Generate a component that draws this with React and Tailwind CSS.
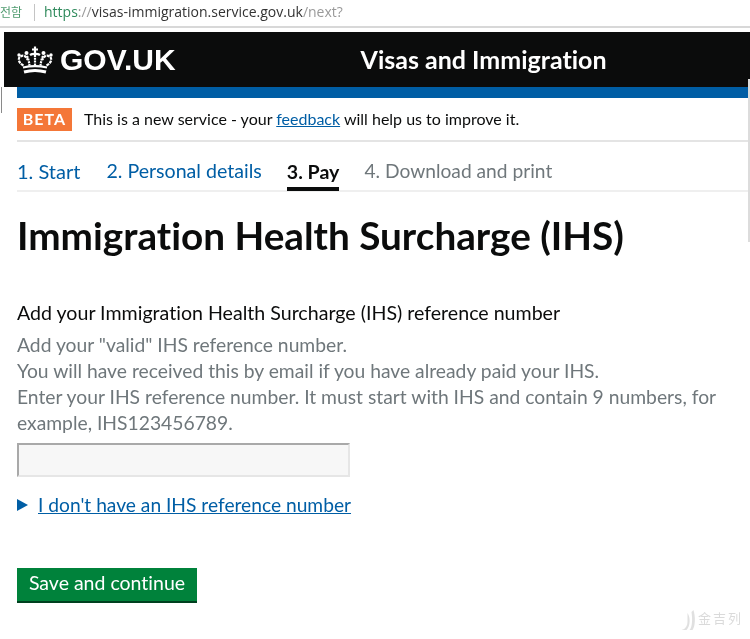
import React from 'react';

const font = "font-['Lato','Noto_Sans',sans-serif]";

// crown logo, drawn by hand from the reference
const Crown = () => (
  <svg width="36" height="28" viewBox="0 0 36 28" className="shrink-0">
    <g fill="none" stroke="#fff" strokeWidth="2.2">
      <path d="M6.5 19.5 C1.5 17 0.5 12.5 3.5 10.5 C6.5 8.5 10 10.5 10.5 14" strokeDasharray="3 0.8" />
      <path d="M29.5 19.5 C34.5 17 35.5 12.5 32.5 10.5 C29.5 8.5 26 10.5 25.5 14" strokeDasharray="3 0.8" />
      <path d="M10 10 C11.5 13 12 16 12.5 19.5" strokeDasharray="2 0.8" />
      <path d="M26 10 C24.5 13 24 16 23.5 19.5" strokeDasharray="2 0.8" />
      <path d="M18 9 V19.5" strokeDasharray="2 0.8" />
      <path d="M18 0.5 V7 M15 3.5 H21" />
      <path d="M13 9 C15 7.5 21 7.5 23 9" />
      <path d="M6 21.5 C14 19.8 22 19.8 30 21.5" strokeWidth="2.2" />
      <path d="M7 26 C14 24 22 24 29 26" strokeWidth="3" />
    </g>
    <g fill="#fff">
      <circle cx="2" cy="9" r="1.7" />
      <circle cx="34" cy="9" r="1.7" />
      <circle cx="9.5" cy="7" r="2" />
      <circle cx="26.5" cy="7" r="2" />
    </g>
  </svg>
);

const App = () => {
  return (
    <div className={`${font} relative h-[639px] w-[750px] overflow-hidden bg-white blur-[0.4px] [font-variant-ligatures:none]`}>
      {/* Browser address bar */}
      <div className="flex h-[28px] items-center border-b-2 border-[#d8d8d8] pb-[2px] leading-none">
        <span className="w-[25px] font-['Noto_Sans_CJK_KR',sans-serif] text-[12px] whitespace-nowrap text-[#4f9b6f]">전함</span>
        <span className="ml-[9px] mr-[9px] h-[17px] w-px bg-[#c4c4c4]" />
        <span className="font-['Open_Sans',sans-serif] text-[14px] whitespace-nowrap">
          <span className="text-[#2f8a5c]">https</span>
          <span className="text-[#9a9a9a]">://</span>
          <span className="text-[#333]">visas-immigration.service.gov.uk</span>
          <span className="text-[#9a9a9a]">/next?</span>
        </span>
      </div>

      {/* Header */}
      <div className="mt-[4px] ml-[4px] flex h-[55px] items-center bg-[#0b0c0c] pl-[13px] text-white">
        <Crown />
        <span className="ml-[7px] font-['Liberation_Sans',sans-serif] text-[30px] font-bold">GOV.UK</span>
        <span className="ml-[185px] text-[25px] font-bold">Visas and Immigration</span>
      </div>

      <div className="ml-[17px] mr-[2px]">
        <div className="h-[11px] bg-[#005ea5]" />

        {/* Beta banner */}
        <div className="flex h-[44px] items-center border-b-2 border-[#e4e4e4]">
          <span className="flex h-[23px] w-[55px] items-center justify-center bg-[#f47738] text-[16px] font-bold tracking-[1px] text-white">BETA</span>
          <span className="ml-[12px] text-[16px] text-[#0b0c0c]">
            This is a new service - your <a className="text-[#005ea5] underline">feedback</a> will help us to improve it.
          </span>
        </div>

        {/* Steps */}
        <div className="flex h-[50px] items-center gap-[25px] border-b-2 border-[#efefef] pt-[10px] text-[19.6px]">
          <span className="mr-[1px] text-[20px] text-[#005ea5]">1. Start</span>
          <span className="text-[#005ea5]">2. Personal details</span>
          <span className="flex h-[40px] items-center border-b-[4px] border-[#0b0c0c] pt-[5px] font-bold text-[#0b0c0c]">3. Pay</span>
          <span className="text-[19.2px] text-[#6f777b]">4. Download and print</span>
        </div>

        <h1 className="mt-[20px] text-[38.7px] leading-[46px] font-bold text-[#0b0c0c]">Immigration Health Surcharge (IHS)</h1>

        <div className="mt-[42px] text-[19.6px] leading-[26px] text-[#0b0c0c]">Add your Immigration Health Surcharge (IHS) reference number</div>
        <div className="mt-[6px] w-[710px] text-[19.3px] leading-[26px] text-[#6f777b]">
          <p>Add your "valid" IHS reference number.</p>
          <p>You will have received this by email if you have already paid your IHS.</p>
          <p>Enter your IHS reference number. It must start with IHS and contain 9 numbers, for example, IHS123456789.</p>
        </div>

        <div className="mt-[7px] h-[34px] w-[333px] border-2 border-[#e6e6e6] border-t-[#a9a9a9] border-l-[#a9a9a9] bg-[#f7f7f7]" />

        <div className="mt-[15px] flex items-center">
          <span className="h-0 w-0 border-y-[6px] border-l-[11px] border-y-transparent border-l-[#005ea5]" />
          <a className="ml-[10px] text-[19.2px] leading-[26px] text-[#005ea5] underline">I don't have an IHS reference number</a>
        </div>

        <button className="mt-[50px] flex h-[35px] w-[180px] items-center justify-center border-b-2 border-[#00401f] bg-[#00823b] pb-[3px] text-[19.5px] text-white">
          Save and continue
        </button>
      </div>

      {/* Scrollbar edge on the right, stray line on the left */}
      <div className="absolute top-[79px] right-0 h-[163px] w-[2px] bg-[#dcdcdc]" />
      <div className="absolute top-[87px] left-[1px] h-[26px] w-px bg-[#8a8a8a]" />

      {/* Watermark */}
      <div className="absolute right-[7px] bottom-[8px] flex items-center gap-[1px] opacity-30">
        <svg width="17" height="22" viewBox="0 0 16 22">
          <path d="M1 21 C5 20 7 17 7 12 V4 C10 8 10 17 6 21 Z M9 21 C12 18 12 10 11 3 L13 1 C15 8 15 17 12 21 Z" fill="#9a9a9a" />
        </svg>
        <span className="mb-[6px] font-['Noto_Sans_CJK_SC',sans-serif] text-[13px] leading-none tracking-[2px] text-[#888]">金吉列</span>
      </div>
    </div>
  );
};

export default App;
